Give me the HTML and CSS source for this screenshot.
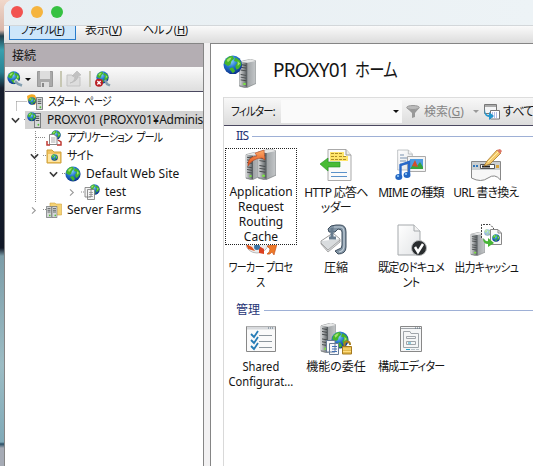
FILE: index.html
```html
<!DOCTYPE html>
<html lang="ja">
<head>
<meta charset="utf-8">
<title>IIS マネージャー</title>
<link rel="stylesheet" href="styles.css">
</head>
<body>
<svg class="defs" aria-hidden="true">
  <defs>
    <radialGradient id="sea" cx=".4" cy=".3" r=".75"><stop offset="0" stop-color="#8bd8ff"/><stop offset=".45" stop-color="#2374cf"/><stop offset="1" stop-color="#082b83"/></radialGradient>
    <linearGradient id="metal"><stop offset="0" stop-color="#d9dbdc"/><stop offset=".6" stop-color="#888c8e"/><stop offset="1" stop-color="#4f5558"/></linearGradient>
    <linearGradient id="side"><stop offset="0" stop-color="#7c8184"/><stop offset="1" stop-color="#c5c8ca"/></linearGradient>
    <linearGradient id="fire" x2="0" y2="1"><stop offset="0" stop-color="#ffac68"/><stop offset="1" stop-color="#dc4916"/></linearGradient>
    <linearGradient id="paper" x2="1" y2="1"><stop offset="0" stop-color="#fff"/><stop offset="1" stop-color="#e2e4e6"/></linearGradient>
    <symbol id="globe" viewBox="0 0 16 16">
      <circle cx="8" cy="8" r="7.6" fill="url(#sea)"/>
      <path d="M2 4Q5 0 8 1L9 3 7 5 6 8 4 9 1 7ZM10 2Q15 4 15 8L13 11 11 12 10 9 12 6 9 5ZM5 11L8 10 10 13 8 15Z" fill="#45b52c"/>
      <path d="M3 4Q5 2 7 2L6 4 4 6ZM12 5L14 7 12 9Z" fill="#a1e36b"/>
    </symbol>
    <symbol id="server" viewBox="0 0 16 32" preserveAspectRatio="none">
      <path d="M1 3L11 0 16 2V27L7 32 1 30Z" fill="url(#side)" stroke="#74787a" stroke-width=".6"/>
      <path d="M1 3L8 4V31L1 29Z" fill="url(#metal)"/>
      <path d="M2 6L7 7M2 9L7 10M2 12L7 13M2 17L7 18M2 20L7 21M2 23L7 24" stroke="#45494b"/>
      <path d="M1 3L11 0 16 2 8 4Z" fill="#e7e8e8"/><circle cx="5.5" cy="27.5" r="1.3" fill="#7be044"/>
    </symbol>
    <symbol id="mini" viewBox="0 0 8 14" preserveAspectRatio="none">
      <path d="M.5.5H7.5V13.5H.5Z" fill="#d5d7d8" stroke="#6f7375"/><path d="M2 3H6M2 5H6M2 7H6" stroke="#4c5254"/><circle cx="5" cy="11" r="1" fill="#51bd35"/>
    </symbol>
    <symbol id="page" viewBox="0 0 24 32">
      <path d="M1 1H17L23 7V31H1Z" fill="url(#paper)" stroke="#a5a9ac"/><path d="M17 1V7H23" fill="#f3f3f3" stroke="#a5a9ac"/>
    </symbol>
  </defs>
</svg>
<div class="window">
  <header class="titlebar"><i class="dot red"></i><i class="dot amber"></i><i class="dot green"></i></header>
  <nav class="menubar">
    <span class="menu active"><b class="m1">ファイル(<u>F</u>)</b></span><span class="menu view"><b>表示(<u>V</u>)</b></span><span class="menu help"><b>ヘルプ(<u>H</u>)</b></span>
  </nav>
  <div class="panes">
    <aside class="connections">
      <h2>接続</h2>
      <div class="tools">
        <svg class="tool-globe" viewBox="0 0 16 16"><use href="#globe" width="13.5" height="13.5"/><path d="M8 9L12 13 15 14" fill="none" stroke="#dfe6ea" stroke-width="4"/><path d="M8 10L11 13 15 14.5" fill="none" stroke="#849eaf" stroke-width="2.5"/></svg>
        <i class="caret c1"></i>
        <svg class="tool-save" viewBox="0 0 16 16"><path d="M.5.5H15.5V15.5H.5Z" fill="#aaa" stroke="#999"/><path d="M3 0H13V8H3ZM4 11H12V16H4Z" fill="#ddd"/><path d="M5 12H7V16H5Z" fill="#888"/></svg>
        <i class="sep s1"></i>
        <svg class="tool-up" viewBox="0 0 16 16"><path d="M1 4H6L8 6H14V15H1Z" fill="#ddd" stroke="#c3c3c3"/><path d="M4 12Q9 11 9 5H6L11 0 15 4 12 5Q12 10 4 12Z" fill="#c2c2c2" stroke="#b5b5b5" stroke-width=".6"/></svg>
        <i class="sep s2"></i>
        <svg class="tool-stop" viewBox="0 0 16 16"><use href="#globe" x="1" width="13" height="13"/><path d="M10 9L12 13 15 14.5" fill="none" stroke="#849eaf" stroke-width="2.5"/><circle cx="4" cy="11.7" r="4" fill="#b91f25"/><path d="M2.3 10L5.7 13.4M5.7 10L2.3 13.4" stroke="#fff" stroke-width="1.4"/></svg>
      </div>
      <div class="tree">
        <svg class="guides" viewBox="0 0 80 130"><path d="M11.5 10.5H22M11.5 10.5V20M19 28.5H22M30.5 40V112M31 46.5H41M38 64.5H42M57 82.5H60M76 101H80M38 118.5H42" fill="none" stroke="#8b8b8b" stroke-dasharray="1 1"/></svg>
        <div class="node n1"><svg viewBox="0 0 16 16"><path d="M0 2Q4-1 8 1L10 6 8 11 1 8Z" fill="#f3aa24"/><use href="#globe" x="1" y="3" width="8" height="8"/><use href="#mini" x="9" y="3" width="7" height="13"/></svg><span>スタート ページ</span></div>
        <div class="node n2"><svg class="chev" viewBox="0 0 8 6"><path d="M.8 1L4 4.3 7.2 1"/></svg><svg viewBox="0 0 16 16"><use href="#mini" x="8" y="1" width="7" height="15"/><use href="#globe" x="1" width="9.5" height="9.5"/></svg><span>PROXY01 (PROXY01¥Administrator)</span></div>
        <div class="node n3"><svg viewBox="0 0 16 16"><use href="#globe" x="5" width="10" height="10"/><path d="M3.5 4.5H8L11 7V14.5H3.5Z" fill="#fff" stroke="#888"/><path d="M1 11V15H4M12 10L15 12V15H11" fill="none" stroke="#bf3932" stroke-width="1.5"/><path d="M5 8H9.5M5 10H9.5M5 12H9.5" stroke="#888" stroke-width=".7"/></svg><span>アプリケーション プール</span></div>
        <div class="node n4"><svg class="chev" viewBox="0 0 8 6"><path d="M.8 1L4 4.3 7.2 1"/></svg><svg viewBox="0 0 16 16"><path d="M1 2H6L8 4H15V15H1Z" fill="#f2c35f" stroke="#cda03b"/><path d="M2 6H14V14H2Z" fill="#ffe5a0"/><use href="#globe" x="5" y="6" width="7" height="7"/></svg><span>サイト</span></div>
        <div class="node n5"><svg class="chev" viewBox="0 0 8 6"><path d="M.8 1L4 4.3 7.2 1"/></svg><svg viewBox="0 0 16 16"><use href="#globe" width="16" height="16"/></svg><span>Default Web Site</span></div>
        <div class="node n6"><svg class="chev closed" viewBox="0 0 6 8"><path d="M1 .8L4.3 4 1 7.2"/></svg><svg viewBox="0 0 16 16"><use href="#globe" x="5" width="11" height="11"/><path d="M1 3.5H7V13H1ZM3.5 5.5H10.5V15.5H3.5Z" fill="#f4f4f4" stroke="#777" stroke-width=".8"/><path d="M5 8.5H9M5 10.5H9M5 12.5H9" stroke="#888" stroke-width=".7"/></svg><span>test</span></div>
        <div class="node n7"><svg class="chev closed" viewBox="0 0 6 8"><path d="M1 .8L4.3 4 1 7.2"/></svg><svg viewBox="0 0 16 16"><path d="M4 1H9L10 2H15.5V13H4Z" fill="#f5d274" stroke="#d2a53f" stroke-width=".6"/><use href="#mini" x="0" y="4" width="6" height="12"/><use href="#mini" x="5.5" y="4" width="6" height="12"/></svg><span>Server Farms</span></div>
      </div>
    </aside>
    <main class="home">
      <div class="heading">
        <svg viewBox="0 0 32 32"><use href="#server" x="15" y="4" width="17" height="28"/><use href="#globe" width="19" height="19"/></svg>
        <h1>PROXY01 <span>ホーム</span></h1>
      </div>
      <section class="content">
        <div class="filter">
          <label><span>フィルター:</span></label><div class="combo"><i class="caret"></i></div>
          <svg class="funnel" viewBox="0 0 14 14"><ellipse cx="7" cy="2.5" rx="6.3" ry="2" fill="#bbb" stroke="#999"/><path d="M.7 3L6 8V13L9 12V8L13.3 3Q7 6 .7 3Z" fill="#999"/></svg>
          <span class="search">検索(<u>G</u>)</span><i class="caret dim"></i>
          <svg class="showall" viewBox="0 0 16 16"><path d="M.5.5H12.5V9.5H.5Z" fill="#f4f5f6" stroke="#777"/><path d="M1 2H12" stroke="#aaa" stroke-width="2"/><path d="M6.5 6.5H15.5V15H6.5Z" fill="#fff" stroke="#777"/><path d="M8 9H14M8 11H14M8 13H14" stroke="#667dcb" stroke-dasharray="1 1"/><path d="M1 5Q1 11 5 11V8L10 12 5 16V13Q-1 12 1 5Z" fill="#2497ce"/></svg>
          <span class="all">すべて表示(<u>A</u>)</span>
        </div>
        <h3 class="iis"><span>IIS</span></h3>
        <div class="grid features">
          <div class="item selected"><svg viewBox="0 0 32 32"><use href="#server" x="0" y="3" width="16" height="28"/><use href="#server" x="12" y="0" width="19" height="31"/><path d="M3 17Q2 8 12 7L10 4 19 1 20 11 17 9Q8 9 3 17Z" fill="url(#fire)" stroke="#ad3b16" stroke-width=".5"/></svg><p class="en">Application<br>Request<br>Routing<br>Cache</p></div>
          <div class="item"><svg viewBox="0 0 32 32"><path d="M8 .5H26L31 6V31.5H8Z" fill="#fafafa" stroke="#aaa"/><path d="M26 .5V6H31" fill="#eee" stroke="#999"/><path d="M10 3H24V7H28V12H10Z" fill="#ffe56c"/><path d="M11 4.5H23M11 7.5H17M19 7.5H26M11 10.5H26" stroke="#ad8d26" stroke-dasharray="3 1"/><path d="M11 23.5H27M11 27.5H27" stroke="#5a91c9"/><path d="M0 15L8 9V13H20V18H8V22Z" fill="#48bb35" stroke="#248e22" stroke-width=".6"/></svg><p class="http">HTTP 応答ヘ<br>ッダー</p></div>
          <div class="item"><svg viewBox="0 0 32 32"><use href="#page" x="2" y="0" width="16" height="22"/><path d="M5 6H9M5 9H12M5 12H11M5 15H12" stroke="#7891ae"/><path d="M12.5 7.5H30.5V22.5H12.5Z" fill="#f4f4f4" stroke="#aaa"/><path d="M15 10H28V20H15Z" fill="#4e9ce0"/><path d="M15 20L19 14 22 17 25 13 28 18V20Z" fill="#36a43c"/><path d="M17 17L20 11 23 18Z" fill="#d44e29"/><path d="M5.5 27V16L14 13V25" fill="none" stroke="#2868c8" stroke-width="2.4"/><ellipse cx="3.8" cy="28" rx="3.5" ry="3" fill="#2467c4"/><ellipse cx="12" cy="26" rx="3.5" ry="3" fill="#2467c4"/><circle cx="3" cy="27" r="1" fill="#9bd5ff"/><circle cx="11" cy="25" r="1" fill="#9bd5ff"/></svg><p class="mime">MIME の種類</p></div>
          <div class="item"><svg viewBox="0 0 32 32"><path d="M1.5 12.5H30.5V31Q25 24 18 29T1.5 29Z" fill="#f7f7f7" stroke="#888"/><path d="M2 13H30V21H2Z" fill="#cbcfd1"/><path d="M10.5 15.5H24.5V19.5H10.5Z" fill="#fff" stroke="#555"/><path d="M12 17.5H20" stroke="#222" stroke-width="2"/><path d="M3 17H8" stroke="#3177bb" stroke-width="2" stroke-dasharray="2 1"/><path d="M26 16H29V19H26Z" fill="#d6a540"/><path d="M14 17L17 12 27 1 31 4 20 15Z" fill="#f6cb6d" stroke="#a77a2d" stroke-width=".8"/><path d="M27 1L30 0 32 2 30 5Z" fill="#dd7767"/><path d="M18 13L28 3" stroke="#fff0ae"/></svg><p class="url">URL 書き換え</p></div>
          <div class="item"><svg viewBox="0 0 32 32"><ellipse cx="12" cy="20" rx="11" ry="9" fill="#ececec" stroke="#bbb"/><path d="M1 20L7 23 10 27 3 25Z" fill="#e0531c"/><path d="M14 22L19 25 19 30 14 29Z" fill="#dc3f20"/><path d="M22 22L32 20 29 31 27 28Q25 31 22 30Q25 28 25 25Z" fill="#ed7929" stroke="#c54d18" stroke-width=".6"/><circle cx="12" cy="23" r="3" fill="#3973a4"/></svg><p class="worker">ワーカー プロセ<br>ス</p></div>
          <div class="item"><svg viewBox="0 0 32 32"><path d="M8 5Q10 1 16 1H20Q26 1 26 8V23Q26 30 18 30L15 27 19 25Q22 25 22 21V8Q22 5 18 5L15 8H9Z" fill="#8294a4" stroke="#3e4e5e"/><path d="M14 3H20Q24 3 24 8V22Q24 27 19 28" fill="none" stroke="#c1ced8" stroke-width="1.2"/><path d="M1 17L13 9 20 15 8 25Z" fill="#fff" stroke="#999"/><path d="M1 17V20L8 28 20 18V15M1 19L8 26 20 16" fill="#d9dcde" stroke="#999" stroke-width=".8"/><path d="M12 4V13M9 14H16" fill="none" stroke="#687c8e" stroke-width="3"/></svg><p class="zip">圧縮</p></div>
          <div class="item"><svg viewBox="0 0 32 32"><use href="#page" x="1" y="0" width="26" height="32"/><circle cx="24" cy="24" r="7.5" fill="#292c2e" stroke="#b7b9ba"/><path d="M20 23L23 28 28 20" fill="none" stroke="#fff" stroke-width="2.5"/></svg><p class="doc">既定のドキュメ<br>ント</p></div>
          <div class="item"><svg viewBox="0 0 32 32"><use href="#server" x="0" y="8" width="15" height="24"/><path d="M11.5 14V.5H20L23.5 4V18" fill="#fff" stroke="#444" stroke-dasharray="2 1"/><use href="#globe" x="14" y="5" width="7" height="7" opacity=".45"/><path d="M20.5 5.5H28L31.5 9V20.5H20.5Z" fill="#f9f9f9" stroke="#888"/><path d="M28 6V9H31" fill="none" stroke="#888"/><use href="#globe" x="22" y="10" width="8" height="8"/><path d="M13 14Q15 18 18 17V14L24 19 18 23V20Q13 20 13 14Z" fill="#46b534"/></svg><p class="cache">出力キャッシュ</p></div>
        </div>
        <h3 class="admin">管理</h3>
        <div class="grid management">
          <div class="item"><svg viewBox="0 0 32 32"><path d="M1.5 3.5H30.5V28.5H1.5Z" fill="#fafafa" stroke="#888"/><path d="M2 5H30" stroke="#d8dadd" stroke-width="3"/><path d="M23 5H29" stroke="#536b7c" stroke-dasharray="1 1"/><path d="M14 12.5H27M14 18.5H27M14 24.5H27" stroke="#8d969d"/><path d="M6 11L9 14 13 8M6 17L9 20 13 14M6 23L9 26 13 20" fill="none" stroke="#267cb6" stroke-width="1.8"/></svg><p class="shared">Shared<br>Configurat...</p></div>
          <div class="item"><svg viewBox="0 0 32 32"><use href="#server" width="16" height="30"/><use href="#globe" x="11" y="8" width="18" height="18"/><path d="M6.5 17.5H15V29H6.5ZM9.5 20.5H18.5V31.5H9.5Z" fill="#f7f8fb" stroke="#687b94"/><path d="M12 23.5H17M12 26H17M12 28.5H17" stroke="#426fb4"/><path d="M24.5 24V21Q24.5 18.5 27 18.5T30 21V22" fill="none" stroke="#a98022" stroke-width="2"/><path d="M22.5 23.5H31.5V31H22.5Z" fill="#e4b94b" stroke="#a57a21"/><path d="M23 26H31M23 28.5H31" stroke="#ffdf82"/></svg><p class="delegate">機能の委任</p></div>
          <div class="item"><svg viewBox="0 0 32 32"><path d="M5.5 3.5H26.5V28.5H5.5Z" fill="#f5f6f7" stroke="#888"/><path d="M6 5.5H26M8.5 24.5V8.5H15L16 10.5H23.5V24.5ZM11.5 13.5H20.5V15.5H11.5ZM11.5 18.5H20.5V21.5H11.5Z" fill="none" stroke="#a0a5aa"/><path d="M20 5H25" stroke="#566a78" stroke-dasharray="1 1"/><path d="M13 20H16" stroke="#2da0c5"/><path d="M11 26.5H15" stroke="#28a4cc"/><path d="M16 26.5H24" stroke="#b9c3c9" stroke-dasharray="4 1"/></svg><p class="editor">構成エディター</p></div>
        </div>
      </section>
    </main>
  </div>
</div>
</body>
</html>
```
FILE: styles.css
```css
* { box-sizing: border-box; }
body {
  margin: 0;
  height: 466px;
  overflow: hidden;
  padding-left: 4px;
  background: linear-gradient(#f1d8ca 0, #d9b7aa 30px, #223e4c 36px, #39a0ae 50px, #288294 72px, #171e2e 88px, #111827 248px, #7c9da8 256px, #9cbcc4 365px, #80aab8 442px, #294e65 444px, #a6abb5 448px);
  color: #151515;
  font: 12px/15px "Noto Sans", "Noto Sans CJK JP", sans-serif;
  font-feature-settings: "palt";
}
svg { display: block; flex: none; }
.defs { position: absolute; width: 0; height: 0; }
h1, h2, h3, p { margin: 0; font-weight: 400; }
.window { height: 466px; border-radius: 9px 0 0 0; overflow: hidden; background: #f2f1f2; display: flex; flex-direction: column; }
.titlebar { height: 26px; background: linear-gradient(90deg, #e7eef2, #edf3f6); border-bottom: 1px solid #d3d7da; display: flex; gap: 8px; padding: 6px 0 0 7px; flex: none; }
.dot { width: 12px; height: 12px; border-radius: 50%; flex: none; }
.red { background: #f25350; }
.amber { background: #f5b43e; }
.green { background: #36c142; }
.menubar { height: 17px; overflow: hidden; display: flex; background: linear-gradient(#fafafa, #dcdcdc); padding-left: 5px; flex: none; }
.menu { height: 14px; line-height: 9px; white-space: nowrap; }
.menu b { display: block; font-weight: 400; margin-top: -1px; transform-origin: left; }
.active { width: 67px; padding-left: 10px; background: #cde6fa; border: 1px solid #287ccc; border-top: 0; }
.m1 { transform: scaleX(.88); letter-spacing: -.7px; }
.view { width: 58px; padding-left: 9px; letter-spacing: -.3px; }
.help b { transform: scaleX(.92); letter-spacing: -.3px; }
.help { padding-left: 9px; }
.panes { flex: 1; display: flex; gap: 6px; min-height: 0; }
.connections { width: 200px; border: 1px solid #858585; border-bottom: 0; background: #fff; flex: none; overflow: hidden; }
h2 { background: #b4aeb3; height: 23px; font-size: 12px; line-height: 24px; padding-left: 7px; }
.tools { height: 25px; border-bottom: 1px solid #4b4860; background: linear-gradient(#fafafa, #dedede); display: flex; align-items: center; padding-left: 2px; }
.tools svg { width: 16px; height: 16px; }
.caret { border: 3px solid transparent; border-top-color: #111; border-bottom: 0; width: 6px; height: 3px; flex: none; }
.c1 { margin: 0 6px 0 2px; }
.sep { width: 2px; height: 16px; background: #c7c7b3; }
.s1 { margin: 0 4px 0 7px; }
.s2 { margin: 0 4px 0 7px; }
.tree { position: relative; padding-top: 1px; }
.guides { position: absolute; left: 0; top: -1px; width: 80px; height: 130px; }
.node { position: relative; height: 18px; display: flex; align-items: center; white-space: nowrap; line-height: 16px; }
.node span { transform-origin: left; padding-bottom: 1px; }
.node > svg:not(.chev) { width: 16px; height: 16px; margin-right: 5px; }
.chev { width: 9px; height: 7px; margin-right: 8px; fill: none; stroke: #3b3b3b; stroke-width: 1.5; }
.chev.closed { width: 6px; height: 9px; stroke: #999; margin: 0 9px 0 2px; stroke-width: 1.1; }
.n1 { padding-left: 22px; }
.n2 { padding-left: 6px; background: linear-gradient(#d3d3d3, #d3d3d3) 20px 0 no-repeat; }
.n2 .chev { margin-right: 6px; }
.n3 { padding-left: 41px; }
.n4 { padding-left: 25px; }
.n4 .chev { margin-right: 7px; }
.n5 { padding-left: 44px; }
.n5 .chev { margin-right: 7px; }
.n6 { padding-left: 62px; }
.n7 { padding-left: 24px; }
.n1 span, .n3 span, .n4 span { letter-spacing: -.9px; word-spacing: 3px; }
.n1 span { transform: scaleX(.82); }
.n3 span { transform: scaleX(.83); }
.n4 span { transform: scaleX(.92); }
.n2 span { letter-spacing: -.25px; }
.home { flex: 1; min-width: 0; background: #fff; border: 1px solid #858585; border-width: 1px 0 0 1px; padding-left: 12px; }
.heading { display: flex; height: 53px; padding-top: 11px; gap: 17px; }
.heading svg { width: 33px; height: 33px; }
h1 { font-size: 19px; line-height: 30px; white-space: nowrap; letter-spacing: -.8px; }
h1 span { display: inline-block; transform: scaleX(.81); transform-origin: left; margin-left: 2px; }
.content { border-left: 1px solid #d9d9d9; height: 380px; width: 330px; }
.filter { height: 29px; border-top: 1px solid #ddd; border-bottom: 1px solid #4b4860; background: linear-gradient(#f8f8f8, #dcdcdc); display: flex; align-items: center; white-space: nowrap; overflow: hidden; width: 309px; }
.filter > * { flex: none; }
.filter label { width: 57px; padding-left: 7px; letter-spacing: -.9px; }
.filter label span { display: block; transform: scaleX(.87); transform-origin: left; }
.combo { width: 121px; height: 23px; background: #fafafa; display: flex; align-items: center; justify-content: flex-end; padding-right: 3px; }
.funnel { width: 14px; height: 14px; margin-left: 4px; }
.search { color: #858585; margin-left: 4px; width: 49px; }
.dim { border-top-color: #999; margin-right: 5px; }
.showall { width: 16px; height: 16px; margin-right: 3px; }
.all { letter-spacing: -.8px; }
h3 { display: flex; align-items: center; gap: 4px; color: #1f3476; padding-left: 12px; font-size: 12px; height: 16px; line-height: 16px; margin-top: 2px; }
h3::after { content: ""; height: 1px; flex: 1; background: #9eb0d6; }
.iis span { letter-spacing: -.8px; }
.grid { display: grid; grid-template-columns: repeat(4, 75px); padding-left: 1px; height: 152px; grid-template-rows: 75px 75px; margin-top: 4px; }
.item { display: flex; flex-direction: column; align-items: center; height: 75px; padding-top: 1px; text-align: center; white-space: nowrap; width: 72px; }
.item svg { width: 32px; height: 32px; }
.item p { margin-top: 4px; }
.selected { height: 97px; background: #fff; outline: 1px dotted #222; outline-offset: -1px; z-index: 1; }
.selected p { margin-top: 3px; }
.management { height: 80px; }
.http, .mime, .url, .worker, .doc, .cache, .editor { letter-spacing: -.7px; }
.worker { transform: scaleX(.83); }
.doc { transform: scaleX(.92); }
.cache { transform: scaleX(.9); }
.editor { transform: scaleX(.92); }
.shared { transform: scaleX(.93); }
```
